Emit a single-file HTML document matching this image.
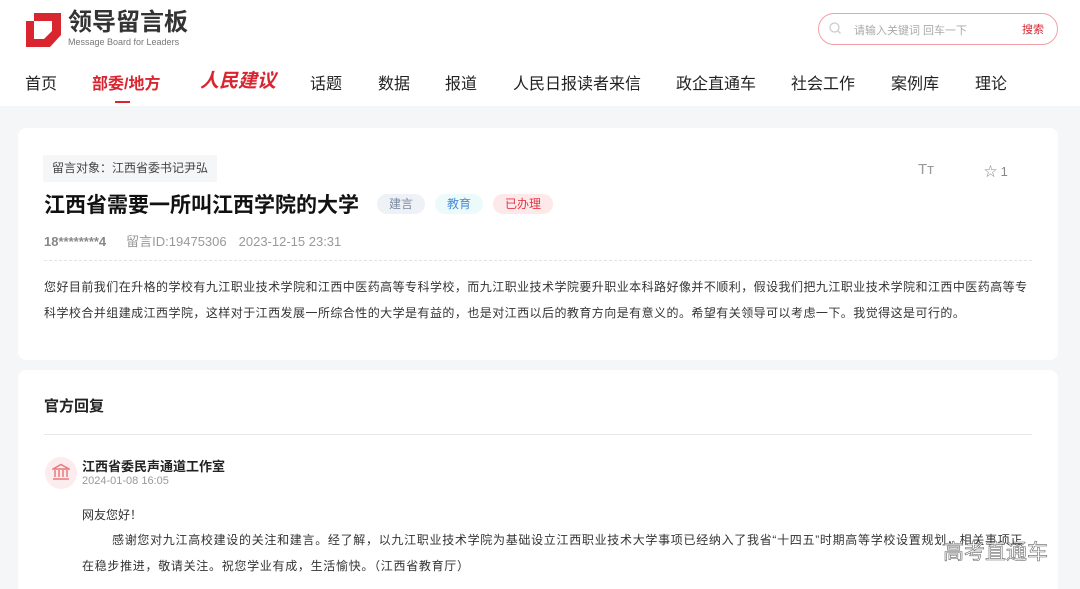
<!DOCTYPE html><html><head><meta charset="utf-8"><style>
*{margin:0;padding:0;box-sizing:border-box}
html,body{width:1080px;height:589px;overflow:hidden}
body{background:#f5f6f8;font-family:"Liberation Sans","Noto Sans CJK SC",sans-serif;color:#333;position:relative}
.hdr{position:absolute;left:0;top:0;width:1080px;height:106px;background:#fff}
.abs{position:absolute;white-space:nowrap}
.nav{font-size:16px;color:#222;top:70px}
.card{position:absolute;left:18px;width:1040px;background:#fff;border-radius:8px}
.tag{display:inline-block;font-size:12px;padding:0 12px;height:20px;line-height:20px;border-radius:10px}
</style></head><body>
<div class="hdr">
<svg class="abs" style="left:26px;top:13px" width="35" height="34" viewBox="0 0 35 34"><path d="M8 0H35V22L24 34H0V8L8 8Z M8 8V26H18L26 18V8Z" fill="#d9252f" fill-rule="evenodd"/></svg>
<div class="abs" style="left:68px;top:11px;font-size:24px;line-height:24px;font-weight:bold;color:#333">领导留言板</div>
<div class="abs" style="left:68px;top:37px;font-size:9px;line-height:10px;color:#777">Message Board for Leaders</div>
<div class="abs" style="left:818px;top:13px;width:240px;height:32px;border:1px solid #f2a0a5;border-radius:16px"></div>
<svg class="abs" style="left:829px;top:22px" width="12" height="12"><circle cx="5.5" cy="5.5" r="4.5" stroke="#ccc" fill="none" stroke-width="1.3"/><path d="M9 9l2.5 2.5" stroke="#ccc" stroke-width="1.3"/></svg>
<div class="abs" style="left:854px;top:22px;font-size:11px;color:#aaa">请输入关键词 回车一下</div>
<div class="abs" style="left:1022px;top:21px;font-size:11px;color:#d9252f">搜索</div>
<div class="abs nav" style="left:25px">首页</div>
<div class="abs nav" style="left:92px;color:#d9252f;font-weight:bold">部委/地方</div>
<div class="abs" style="left:115px;top:101px;width:15px;height:2px;background:#d9252f"></div>
<div class="abs nav" style="left:200px;top:66px;color:#d9252f;font-size:19px;font-style:italic;font-weight:bold">人民建议</div>
<div class="abs nav" style="left:310px">话题</div>
<div class="abs nav" style="left:378px">数据</div>
<div class="abs nav" style="left:445px">报道</div>
<div class="abs nav" style="left:513px">人民日报读者来信</div>
<div class="abs nav" style="left:676px">政企直通车</div>
<div class="abs nav" style="left:791px">社会工作</div>
<div class="abs nav" style="left:891px">案例库</div>
<div class="abs nav" style="left:975px">理论</div>
</div>
<div class="card" style="top:128px;height:232px">
<div class="abs" style="left:25px;top:27px;height:27px;line-height:27px;padding:0 9px;background:#f5f6f8;font-size:12px;color:#444">留言对象：江西省委书记尹弘</div>
<div class="abs" style="left:26px;top:61px;font-size:21px;font-weight:bold;color:#111">江西省需要一所叫江西学院的大学</div>
<div class="abs" style="left:359px;top:66px"><span class="tag" style="background:#eef1f6;color:#7a8aa0">建言</span><span class="tag" style="background:#ecfbfa;color:#4a8ad6;margin-left:10px">教育</span><span class="tag" style="background:#fde8ea;color:#e03a45;margin-left:10px">已办理</span></div>
<div class="abs" style="left:900px;top:33px;font-size:15px;color:#999">Tт</div>
<div class="abs" style="left:966px;top:33px;font-size:13px;color:#888">☆ 1</div>
<div class="abs" style="left:26px;top:103px;font-size:13px;color:#999"><b style="color:#888">18********4</b><span style="margin-left:20px">留言ID:19475306</span><span style="margin-left:12px">2023-12-15 23:31</span></div>
<div class="abs" style="left:26px;top:132px;width:988px;border-top:1px dashed #e3e3e3"></div>
<div class="abs" style="left:26px;top:146px;width:988px;white-space:normal;font-size:12px;line-height:26px;color:#333;letter-spacing:0.45px">您好目前我们在升格的学校有九江职业技术学院和江西中医药高等专科学校，而九江职业技术学院要升职业本科路好像并不顺利，假设我们把九江职业技术学院和江西中医药高等专科学校合并组建成江西学院，这样对于江西发展一所综合性的大学是有益的，也是对江西以后的教育方向是有意义的。希望有关领导可以考虑一下。我觉得这是可行的。</div>
</div>
<div class="card" style="top:370px;height:240px">
<div class="abs" style="left:26px;top:25px;font-size:15px;font-weight:bold;color:#222">官方回复</div>
<div class="abs" style="left:26px;top:64px;width:988px;border-top:1px solid #e8e8e8"></div>
<div class="abs" style="left:27px;top:87px;width:32px;height:32px;border-radius:16px;background:#fdecee"></div>
<svg class="abs" style="left:34px;top:93px" width="18" height="18" viewBox="0 0 18 18" fill="none" stroke="#e9787f" stroke-width="1.5"><path d="M1 6L9 1.5 17 6ZM3 7v7M7 7v7M11 7v7M15 7v7M1 16h16"/></svg>
<div class="abs" style="left:64px;top:86px;font-size:13px;font-weight:bold;color:#222">江西省委民声通道工作室</div>
<div class="abs" style="left:64px;top:105px;font-size:11px;color:#999">2024-01-08 16:05</div>
<div class="abs" style="left:64px;top:136px;font-size:12px;color:#333">网友您好！</div>
<div class="abs" style="left:64px;top:157px;width:945px;white-space:normal;font-size:12px;line-height:26px;color:#333;text-indent:30px;letter-spacing:0.7px">感谢您对九江高校建设的关注和建言。经了解，以九江职业技术学院为基础设立江西职业技术大学事项已经纳入了我省“十四五”时期高等学校设置规划，相关事项正在稳步推进，敬请关注。祝您学业有成，生活愉快。（江西省教育厅）</div>
</div>
<div class="abs" style="left:943px;top:536px;font-size:21px;color:#fff;-webkit-text-stroke:0.6px #666">高考直通车</div>
</body></html>
